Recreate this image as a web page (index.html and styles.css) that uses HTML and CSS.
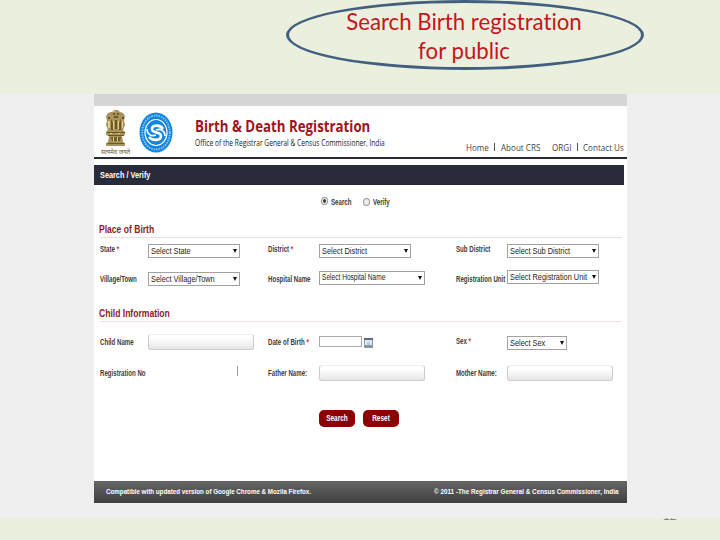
FILE: index.html
```html
<!DOCTYPE html>
<html lang="en">

<head>
    <meta charset="utf-8" />
    <title>Birth &amp; Death Registration</title>
    <link rel="stylesheet" href="styles.css">
</head>

<body>
    <div class="slide-head">
        <h1 class="slide-title"><span>Search Birth registration</span><span>for public</span></h1>
    </div>
    <div class="band">
        <div class="panel">
            <div class="topbar"></div>
            <div class="banner">
                <div class="emblem">
                    <svg width="24" height="38" viewBox="0 0 24 38">
                        <path fill="#a8935a" d="M8 3l2-2h4l2 2 3 1 2 3-1 5 1 4-2 5 2 2v3l-3 1 1 6 2 1v3H2v-3l2-1 1-6-3-1v-3l2-2-2-5 1-4-1-5 2-3 3-1z" />
                        <path fill="#6d5725" d="M9 4h2v2H9zM13 4h2v2h-2zM10 7h4v2h-4zM4 8h2v2H4zM18 8h2v2h-2zM7 10l2 4v7H7zM17 10l-2 4v7h2zM11 11h2v9h-2zM3 23h18v1H3zM4 26h16v1H4zM7 28h10l-1 4H8zM4 34h16v1H4z" />
                        <path fill="#e0d08e" d="M9 2h2v1H9zM4 12h2v7H4zM9 12h1v8H9zM14 12h1v8h-1zM18 12h1v7h-1zM9 28h1v4H9zM13 28h1v4h-1zM6 24h2v1H6zM14 24h2v1h-2z" />
                    </svg>
                    <span class="motto">सत्यमेव जयते</span>
                </div>
                <svg class="seal" width="34" height="41" viewBox="0 0 34 41">
                    <ellipse cx="17" cy="20.5" rx="16.5" ry="20" fill="#1486dd" />
                    <ellipse cx="17" cy="20.5" rx="13.8" ry="17" fill="none" stroke="#8fc6ee" stroke-width="1.8" stroke-dasharray="1.5 1" />
                    <ellipse cx="17" cy="20.5" rx="11" ry="13" fill="none" stroke="#fff" stroke-width="1.2" />
                    <path fill="none" stroke="#fff" stroke-width="2.6" d="M24 17c-3-5-11-4-11 0 0 5 9 2 9 7 0 5-9 5-12 1" />
                    <path fill="none" stroke="#fff" stroke-width="1.6" d="M8 17c0 5 4 8 9 6M26 24c0-5-4-8-9-6" />
                </svg>
                <div class="brand">
                    <div class="brand-name"><span>Birth &amp; Death Registration</span></div>
                    <div class="brand-office"><span>Office of the Registrar General &amp; Census Commissioner, India</span></div>
                </div>
                <div class="menu">
                    <span class="home">Home</span><i></i><span class="about">About CRS</span><span class="orgi">ORGI</span><i></i><span class="contact">Contact Us</span>
                </div>
            </div>
            <div class="crumb"><span class="label">Search / Verify</span></div>
            <form class="form">
                <div class="modes">
                    <b class="radio on"></b><span class="label">Search</span>
                    <b class="radio off"></b><span class="label">Verify</span>
                </div>
                <h2><span>Place of Birth</span></h2>
                <div class="row state-row">
                    <span class="label">State <em>*</em></span>
                    <div class="select"><span>Select State</span></div>
                    <span class="label">District <em>*</em></span>
                    <div class="select"><span>Select District</span></div>
                    <span class="label">Sub District</span>
                    <div class="select"><span>Select Sub District</span></div>
                </div>
                <div class="row village-row">
                    <span class="label">Village/Town</span>
                    <div class="select"><span>Select Village/Town</span></div>
                    <span class="label">Hospital Name</span>
                    <div class="select hospital"><span>Select Hospital Name</span></div>
                    <span class="label">Registration Unit</span>
                    <div class="select unit"><span>Select Registration Unit</span></div>
                </div>
                <h2><span>Child Information</span></h2>
                <div class="row name-row">
                    <span class="label">Child Name</span>
                    <div class="field"></div>
                    <span class="label">Date of Birth <em>*</em></span>
                    <div class="date">
                        <div class="date-input"></div>
                        <svg width="9" height="10" viewBox="0 0 9 10">
                            <path fill="#8d9bb0" d="M0 0h9v10H0z" />
                            <path fill="#5d6c86" d="M0 0h9v2H0z" />
                            <path fill="#dce9f5" d="M1 2h7v5H1z" />
                            <path fill="#b9cfe2" d="M3 4h3v3H3z" />
                            <path fill="#70977a" d="M1 8h7v1H1z" />
                        </svg>
                    </div>
                    <span class="label sex-label">Sex <em>*</em></span>
                    <div class="select sex"><span>Select Sex</span></div>
                </div>
                <div class="row parents-row">
                    <span class="label">Registration No</span>
                    <div class="regno"></div>
                    <span class="label">Father Name:</span>
                    <div class="field"></div>
                    <span class="label">Mother Name:</span>
                    <div class="field"></div>
                </div>
                <div class="buttons">
                    <div class="btn"><span class="label">Search</span></div>
                    <div class="btn"><span class="label">Reset</span></div>
                </div>
            </form>
            <div class="footer">
                <span class="compat">Compatible with updated version of Google Chrome &amp; Mozila Firefox.</span>
                <span class="copy">© 2011 -The Registrar General &amp; Census Commissioner, India</span>
            </div>
        </div>
    </div>
    <div class="slide-no"><span>12</span></div>
</body>

</html>
```

FILE: styles.css
```css
* {
    margin: 0;
    padding: 0;
    box-sizing: border-box;
}

body {
    width: 720px;
    height: 540px;
    overflow: hidden;
    background: #ebefde;
    font-family: "Liberation Sans", Arial, sans-serif;
    white-space: nowrap;
}

.slide-head {
    height: 94px;
}

.slide-title {
    width: 358px;
    height: 70px;
    margin-left: 286px;
    padding-top: 4px;
    border: 3px solid #41607f;
    border-radius: 50%;
    font: 23.5px/29px Lato, sans-serif;
    font-variant-ligatures: none;
    color: #c4161a;
    text-align: center;
}

.slide-title span {
    display: block;
    transform: translateX(-1px) scaleX(.945);
}

.band {
    height: 424px;
    padding-left: 94px;
    background: #efefef;
}

.panel {
    width: 533px;
    height: 409px;
    display: flex;
    flex-direction: column;
    background: #fff;
}

.topbar {
    height: 12px;
    background: #d6d6d6;
}

.banner {
    display: flex;
    height: 53px;
    border-bottom: 2px solid #292b3a;
}

.banner > * {
    flex: none;
}

.emblem {
    width: 45px;
    padding: 3px 0 0 10px;
}

.emblem svg {
    display: block;
}

.motto {
    display: block;
    margin: 1px 0 0 -3px;
    font: 6px/8px "Noto Sans", sans-serif;
    color: #6b5a38;
}

.seal {
    margin-top: 6px;
}

.brand {
    width: 293px;
    padding: 10px 0 0 22px;
}

.brand span,
.label,
.select span,
.menu span,
.footer span,
h2 span {
    display: inline-block;
    transform-origin: 0 50%;
}

.brand-name {
    font: bold 16px/21px "Open Sans", sans-serif;
    color: #a01418;
}

.brand-name span {
    transform: scaleX(.83);
}

.brand-office {
    font: 8.5px/12px "Open Sans", sans-serif;
    color: #222;
}

.brand-office span {
    transform: scaleX(.782);
}

.menu {
    display: flex;
    height: 14px;
    margin-top: 35px;
    font: 9.5px/14px "Open Sans", sans-serif;
    color: #444;
}

.menu i {
    width: 1px;
    height: 8px;
    margin-top: 2px;
    background: #555;
}

.menu .home {
    width: 28px;
}

.menu .about {
    width: 51px;
    margin-left: 6px;
}

.menu .orgi {
    width: 25px;
}

.menu .contact {
    margin-left: 5px;
}

.menu span {
    transform: scaleX(.85);
}

.crumb {
    width: 530px;
    height: 20px;
    margin-top: 6px;
    padding-left: 6px;
    background: #292b3a;
    color: #fff;
}

.label {
    font-size: 8.5px;
    line-height: 10px;
    font-weight: bold;
    transform: scaleX(.72);
}

.crumb .label {
    display: block;
    line-height: 20px;
    transform: scaleX(.86);
}

.form {
    flex: 1;
    padding-left: 6px;
    color: #3c3c3c;
}

.form em {
    font-style: normal;
    color: #c33;
}

.modes {
    display: flex;
    height: 37px;
    padding: 12px 0 0 221px;
}

.modes .label {
    width: 28px;
    margin-left: 3px;
}

.radio {
    width: 7px;
    height: 8px;
    border: 1px solid #999;
    border-radius: 50%;
    background: #eee;
}

.on {
    background: radial-gradient(#444 35%, #eee 50%);
}

.off {
    margin-top: 1px;
    margin-left: 4px;
}

h2 {
    width: 522px;
    height: 16px;
    border-bottom: 1px solid #f3dcdf;
    font-size: 10.5px;
    line-height: 14px;
    color: #8e1b22;
}

h2 span {
    transform: translateX(-1px) scaleX(.815);
}

.row {
    display: grid;
    grid-template-columns: 48px 120px 51px 137px 51px 120px;
    align-items: start;
}

.state-row {
    height: 28px;
    padding-top: 5px;
}

.village-row {
    height: 40px;
    padding-top: 6px;
}

.name-row {
    height: 31px;
    padding-top: 12px;
}

.parents-row {
    height: 57px;
    padding-top: 12px;
}

.row .label {
    margin-top: 1px;
}

.name-row .label,
.parents-row .label {
    margin-top: 3px;
}

.name-row .sex-label {
    margin-top: 2px;
}

.village-row .label {
    margin-top: 2px;
}

.select {
    position: relative;
    width: 92px;
    height: 14px;
    border: 1px solid #a2a2a2;
    padding-left: 2px;
    font-size: 9.5px;
    line-height: 12px;
    color: #222;
}

.select span {
    transform: scaleX(.775);
}

.select::after {
    content: "";
    position: absolute;
    right: 2px;
    top: 4px;
    border: 2px solid transparent;
    border-top: 4px solid #111;
    border-bottom: 0;
}

.state-row .select {
    margin-top: 1px;
}

.village-row .hospital {
    width: 106px;
    font-size: 8.5px;
    line-height: 11px;
    margin-top: -1px;
}

.unit {
    margin-top: -2px;
}

.sex {
    width: 60px;
    margin-top: 2px;
}

.field {
    width: 106px;
    height: 16px;
    border: 1px solid #ccc;
    border-top-color: #eee;
    border-radius: 3px;
    background: linear-gradient(#fff 20%, #e6e6e6);
}

.date {
    display: flex;
    gap: 2px;
    padding-top: 2px;
}

.date-input {
    width: 43px;
    height: 11px;
    border: 1px solid #aaa;
}

.date svg {
    margin-top: 2px;
}

.regno {
    width: 90px;
    height: 10px;
    margin-top: 1px;
    border-right: 1px solid #999;
}

.buttons {
    display: flex;
    gap: 8px;
    padding-left: 219px;
}

.btn {
    width: 36px;
    height: 17px;
    border-radius: 5px;
    background: #8b0000;
    color: #fff;
}

.btn .label {
    display: block;
    line-height: 17px;
    text-align: center;
    transform: scaleX(.76);
    transform-origin: 50% 50%;
}

.footer {
    display: flex;
    height: 22px;
    padding-left: 12px;
    background: linear-gradient(#666, #3f3f3f);
    font-size: 8px;
    line-height: 21px;
    font-weight: bold;
    color: #fff;
}

.footer span {
    transform: scaleX(.79);
}

.footer .compat {
    width: 328px;
    flex: none;
    transform: scaleX(.778);
}

/* only the foot of the slide number shows */
.slide-no {
    display: flex;
    align-items: flex-end;
    height: 3px;
    padding-left: 663px;
    overflow: hidden;
    font-size: 12px;
    line-height: 10px;
    color: #888;
}
```
